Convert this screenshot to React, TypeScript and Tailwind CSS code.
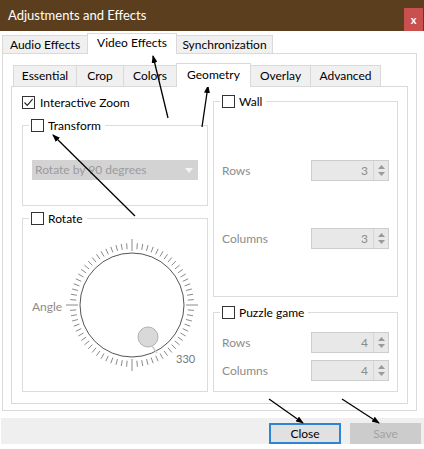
import React from "react";

function CheckBox({ checked = false }: { checked?: boolean }) {
  return (
    <span className="flex h-[13px] w-[13px] flex-none items-center justify-center border border-[#333] bg-white">
      {checked && (
        <svg width="11" height="11" viewBox="0 0 11 11">
          <path d="M1.5 5.5 L4.3 8.4 L9.6 2.2" fill="none" stroke="#222" strokeWidth="1.1" />
        </svg>
      )}
    </span>
  );
}

function Group({
  label,
  className = "",
  children,
}: {
  label: string;
  className?: string;
  children?: React.ReactNode;
}) {
  return (
    <fieldset className={`border border-[#dcdcdc] ${className}`}>
      <legend className="ml-[6px] px-[2px]">
        <span className="flex items-center gap-[4px] pr-[2px] text-[12px] leading-[13px] text-black">
          <CheckBox />
          {label}
        </span>
      </legend>
      {children}
    </fieldset>
  );
}

function Spin({ label, value, className = "" }: { label: string; value: number; className?: string }) {
  return (
    <div className={`flex items-center justify-between pl-[8px] pr-[8px] ${className}`}>
      <span className="text-[12px] text-[#8c8c8c]">{label}</span>
      <div className="flex h-[21px] w-[78px] border border-[#cdcdcd] bg-[#e8e8e8]">
        <span className="flex-1 pr-[5px] text-right text-[12px] leading-[19px] text-[#8c8c8c]">{value}</span>
        <span className="flex w-[15px] flex-col items-center justify-center gap-[3px] border-l border-[#d6d6d6]">
          <svg width="7" height="4" viewBox="0 0 7 4">
            <path d="M0 4 L3.5 0 L7 4 Z" fill="#9a9a9a" />
          </svg>
          <svg width="7" height="4" viewBox="0 0 7 4">
            <path d="M0 0 L3.5 4 L7 0 Z" fill="#9a9a9a" />
          </svg>
        </span>
      </div>
    </div>
  );
}

function Dial() {
  const ticks = Array.from({ length: 72 }, (_, i) => {
    const a = (i * 5 * Math.PI) / 180;
    const major = i % 18 === 0;
    const r1 = major ? 54 : 56;
    const r2 = major ? 66 : 62;
    return (
      <line
        key={i}
        x1={70 + r1 * Math.cos(a)}
        y1={70 + r1 * Math.sin(a)}
        x2={70 + r2 * Math.cos(a)}
        y2={70 + r2 * Math.sin(a)}
        stroke="#8a8a8a"
        strokeWidth="1"
      />
    );
  });
  return (
    <svg width="140" height="140" viewBox="0 0 140 140" className="flex-none">
      {ticks}
      <circle cx="70" cy="70" r="52" fill="#fff" stroke="#555" strokeWidth="1" />
      <line x1="90" y1="111" x2="95" y2="118" stroke="#cfcfcf" strokeWidth="1.5" />
      <circle cx="86" cy="102" r="10" fill="#d9d9d9" stroke="#b2b2b2" strokeWidth="1" />
      <text x="114" y="128" fontSize="11" fill="#777" fontFamily="Lato, sans-serif">
        330
      </text>
    </svg>
  );
}

export default function App() {
  const outerTabs = [
    { t: "Audio Effects", w: "w-[86px]" },
    { t: "Video Effects", w: "w-[90px]", on: true },
    { t: "Synchronization", w: "w-[97px]" },
  ];
  const innerTabs = [
    { t: "Essential", w: "w-[64px]" },
    { t: "Crop", w: "w-[48px]" },
    { t: "Colors", w: "w-[54px]" },
    { t: "Geometry", w: "w-[75px]", on: true },
    { t: "Overlay", w: "w-[61px]" },
    { t: "Advanced", w: "w-[71px]" },
  ];

  return (
    <div className="relative h-[449px] w-[424px] overflow-hidden bg-white font-['Lato',sans-serif] text-[12px] text-black">
      {/* title bar */}
      <div className="flex h-[31px] items-start justify-between bg-[#5a3e1d]">
        <span className="pl-[8px] pt-[7px] text-[13px] leading-[16px] text-white">Adjustments and Effects</span>
        <span className="mt-[8px] mr-[1px] flex h-[23px] w-[19px] items-center justify-center bg-[#c9504f] text-[11px] font-bold leading-none text-white">
          x
        </span>
      </div>

      {/* outer tabs */}
      <div className="flex h-[22px] items-end pl-[2px] pt-[2px]">
        {outerTabs.map((tab) => (
          <div
            key={tab.t}
            className={`-ml-px flex items-center justify-center border border-b-0 border-[#d9d9d9] first:ml-0 ${tab.w} ${
              tab.on ? "relative z-10 -mb-px h-[21px] bg-white pb-[3px]" : "h-[18px] bg-[#f0f0f0]"
            }`}
          >
            {tab.t}
          </div>
        ))}
      </div>

      {/* outer pane */}
      <div className="ml-[2px] h-[358px] w-[415px] border border-[#dadada] pl-[8px] pt-[9px]">
        {/* inner tabs */}
        <div className="flex h-[23px] items-end pl-[2px]">
          {innerTabs.map((tab) => (
            <div
              key={tab.t}
              className={`-ml-px flex items-center justify-center border border-b-0 border-[#d9d9d9] first:ml-0 ${tab.w} ${
                tab.on ? "relative z-10 -mb-px h-[24px] bg-white pb-[2px]" : "h-[21px] bg-[#f0f0f0]"
              }`}
            >
              {tab.t}
            </div>
          ))}
        </div>

        {/* inner pane */}
        <div className="flex h-[318px] w-[397px] gap-[5px] border border-[#d9d9d9] bg-white pl-[10px] pt-[8px]">
          {/* left column */}
          <div className="flex w-[186px] flex-col">
            <div className="mt-[1px] flex h-[13px] items-center gap-[5px]">
              <CheckBox checked />
              <span className="leading-[13px]">Interactive Zoom</span>
            </div>
            <Group label="Transform" className="mt-[10px] h-[87px]">
              <div className="mx-[9px] mt-[28px] flex h-[20px] items-center justify-between bg-[#d3d3d3] pl-[3px] pr-[5px]">
                <span className="text-[12px] text-[#9b9b9b]">Rotate by 90 degrees</span>
                <svg width="8" height="5" viewBox="0 0 8 5">
                  <path d="M0 0 L4 5 L8 0 Z" fill="#f4f4f4" />
                </svg>
              </div>
            </Group>
            <Group label="Rotate" className="mt-[6px] h-[180px]">
              <div className="mt-[10px] flex items-center pl-[9px]">
                <span className="mt-[4px] w-[30px] text-[12px] text-[#8c8c8c]">Angle</span>
                <Dial />
              </div>
            </Group>
          </div>

          {/* right column */}
          <div className="flex w-[185px] flex-col">
            <Group label="Wall" className="h-[202px]">
              <Spin label="Rows" value={3} className="mt-[52px]" />
              <Spin label="Columns" value={3} className="mt-[47px]" />
            </Group>
            <Group label="Puzzle game" className="mt-[9px] h-[86px]">
              <Spin label="Rows" value={4} className="mt-[13px]" />
              <Spin label="Columns" value={4} className="mt-[7px]" />
            </Group>
          </div>
        </div>
      </div>

      {/* bottom bar */}
      <div className="mt-[7px] ml-[1px] flex h-[26px] items-end justify-end gap-[9px] bg-[#efefef] pr-[3px]">
        <button className="h-[21px] w-[72px] border-2 border-[#2f84d3] bg-[#e1e1e1] text-[12px] text-black">Close</button>
        <button className="h-[21px] w-[71px] bg-[#cccccc] text-[12px] text-[#a2a2a2]">Save</button>
      </div>

      {/* annotation arrows */}
      <svg className="pointer-events-none absolute inset-0" width="424" height="449" viewBox="0 0 424 449">
        <defs>
          <marker id="ah" markerWidth="8" markerHeight="6" refX="7" refY="3" orient="auto" markerUnits="userSpaceOnUse">
            <path d="M0 0 L8 3 L0 6 Z" fill="#000" />
          </marker>
        </defs>
        <line x1="168" y1="118" x2="153" y2="56" stroke="#000" strokeWidth="1.3" markerEnd="url(#ah)" />
        <line x1="202" y1="127" x2="208" y2="86" stroke="#000" strokeWidth="1.3" markerEnd="url(#ah)" />
        <line x1="135" y1="216" x2="53" y2="135" stroke="#000" strokeWidth="1.3" markerEnd="url(#ah)" />
        <line x1="269" y1="399" x2="303" y2="423" stroke="#000" strokeWidth="1.3" markerEnd="url(#ah)" />
        <line x1="342" y1="399" x2="379" y2="423" stroke="#000" strokeWidth="1.3" markerEnd="url(#ah)" />
      </svg>
    </div>
  );
}
